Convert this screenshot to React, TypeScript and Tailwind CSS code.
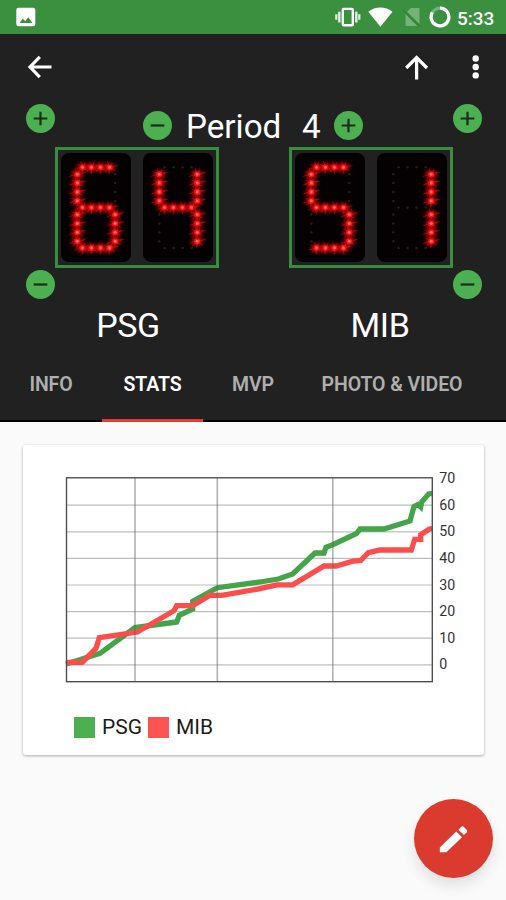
import type { ReactNode } from "react";
import clsx from "clsx";

type Point = [number, number];

const TABS = [
  { label: "INFO", width: "w-[102px]" },
  { label: "STATS", width: "w-[101px]" },
  { label: "MVP", width: "w-[100px]" },
  { label: "PHOTO & VIDEO", width: "w-[178px]" },
];

// Segment order: top, upper left, upper right, middle, lower left, lower right, bottom
const DIGITS: Record<string, string> = {
  "1": "0010010",
  "4": "0111010",
  "5": "1101011",
  "6": "1101111",
};

const COLS = [21.6, 30.6, 39.6, 48.6];
const UPPER = [21.3, 30, 39, 48];
const LOWER = [61.6, 70.6, 79.3, 88.3];

const SEGMENTS: Point[][] = [
  COLS.map((x): Point => [x, 14.3]),
  UPPER.map((y): Point => [16.3, y]),
  UPPER.map((y): Point => [54.2, y]),
  COLS.map((x): Point => [x, 54.6]),
  LOWER.map((y): Point => [16.3, y]),
  LOWER.map((y): Point => [54.2, y]),
  COLS.map((x): Point => [x, 95]),
];

const PSG_LINE =
  "66,664 82,659 100,653.3 135,627.6 176.7,622 179.3,615.3 192.7,609 192.7,601.3 217.3,587.7 260,582 278.3,579 292.7,574 315,553 324,553 326,547.3 332.7,544.7 356.7,533.3 360,529 384,529 410,521 414,506.5 418,504.5 420.7,507 422,501.5 428.8,494 432.6,493.3";
const MIB_LINE =
  "66,662.5 82.3,662.3 96,648.3 99.3,637.7 137.3,632 174,610.7 176.7,605.7 192.7,605.7 210,595.3 221.7,595.3 260,588.7 276.7,584.8 292.7,584.8 324,566 336,566 353.3,561 360.7,560.5 368.3,552.7 380,550 411.3,550 414.7,539.3 420.7,539.3 420.7,534.7 429.3,529 432.6,528.5";

const GRID_Y = [505.2, 531.8, 558.4, 585, 611.6, 638.2, 664.8];
const GRID_X = [135, 217.3, 332.8];
const TICKS = [70, 60, 50, 40, 30, 20, 10, 0];

function StatusBar() {
  return (
    <div className="flex h-[34px] items-center bg-[#3a903e] pl-4 pr-[11px] text-white">
      <svg width="20" height="20" viewBox="0 0 20 20">
        <rect x="0.3" y="0.8" width="19" height="18.5" rx="2.2" fill="currentColor" />
        <path d="M3.5 16l3.4-4.4 2.3 2.7 3-4 4.3 5.7z" fill="#3a903e" />
      </svg>
      <div className="ml-auto flex items-center">
        <svg width="27" height="20" viewBox="0 0 27 20" fill="none" stroke="currentColor">
          <rect x="7.8" y="1.9" width="10" height="16.4" rx="1" strokeWidth="2.4" />
          <path d="M4.3 4.8v10.6M21.3 4.8v10.6" strokeWidth="2.4" strokeOpacity="0.85" />
          <path d="M1.300 7.200v5.600M24.300 7.200v5.600" strokeWidth="2.200" strokeOpacity="0.85" />
        </svg>
        <svg className="ml-[6px]" width="26" height="20" viewBox="0 0 26 20">
          <path d="M.3 4.700C7.100-1 17.700-1 24.500 4.700L12.400 19.800z" fill="currentColor" />
        </svg>
        <svg className="ml-[8px]" width="20" height="20" viewBox="0 0 20 20">
          <path
            d="M9 1h7.500a1 1 0 0 1 1 1v15L5 4.700zM3.500 7l11.800 12H4.500a1 1 0 0 1-1-1z"
            fill="currentColor"
            fillOpacity="0.3"
          />
          <path d="M1 3l17.500 17" stroke="#2f7d34" strokeOpacity="0.6" strokeWidth="1.600" />
        </svg>
        <svg className="ml-[7px]" width="22" height="22" viewBox="0 0 22 22" fill="none" stroke="currentColor">
          <circle cx="11" cy="11" r="8.900" strokeWidth="3.200" strokeOpacity="0.3" />
          <path d="M11 2.100A8.900 8.900 0 1 1 3.400 6.400" strokeWidth="3.200" />
        </svg>
        <span className="ml-[6px] w-[38px] whitespace-nowrap pt-[2px] text-[19px] font-medium leading-none">5:33</span>
      </div>
    </div>
  );
}

function Toolbar() {
  return (
    <div className="flex h-[70px] items-center pb-[4px] pl-[27px] pr-[20px]">
      <svg width="26" height="26" viewBox="0 0 26 26" fill="none" stroke="white" strokeWidth="3.2">
        <path d="M12.800 2.800L3 13l9.800 10.200M3 13H24.500" />
      </svg>
      <svg className="ml-auto" width="26" height="26" viewBox="0 0 26 26" fill="none" stroke="white" strokeWidth="3.2">
        <path d="M2.200 14L12.600 3.500 23 14M12.600 3.500V25.500" />
      </svg>
      <svg className="ml-[36px]" width="20" height="26" viewBox="0 0 20 26" fill="white">
        <circle cx="9.700" cy="4.500" r="3.200" />
        <circle cx="9.700" cy="13" r="3.200" />
        <circle cx="9.700" cy="21.400" r="3.200" />
      </svg>
    </div>
  );
}

function RoundButton({ kind }: { kind: "plus" | "minus" }) {
  return (
    <button
      aria-label={kind}
      className="flex size-[29px] shrink-0 items-center justify-center rounded-full bg-[#4caf50]"
    >
      <svg width="15" height="15" viewBox="0 0 15 15" stroke="#1f2a1f" strokeWidth="2.2">
        <path d={kind === "plus" ? "M.7 7.500h13.600M7.500.7v13.600" : "M.7 7.500h13.600"} />
      </svg>
    </button>
  );
}

function Led({ x, y }: { x: number; y: number }) {
  return (
    <g transform={`translate(${x} ${y})`}>
      <ellipse rx="9.500" ry="7.500" fill="url(#led-glow)" />
      <path
        d="M-9.500 2.600L-3-.8-6.500-3.200-2-2.200-2.200-6.500.4-2.600 2.800-6 2.400-1.900 9.800-2.200 3.200.8 6 4 1.400 2.400-.5 7.500-1.600 2.600-5.500 5.500-3.200 1.500z"
        fill="#ee0000"
        fillOpacity="0.62"
      />
      <circle r="2.900" fill="#ff1414" />
      <circle r="1.400" fill="#ff7c7c" />
    </g>
  );
}

function Digit({ value }: { value: string }) {
  return (
    <svg className="rounded-[8px] bg-[#050001]" width="70" height="109" viewBox="0 0 70 109">
      {SEGMENTS.map((leds, s) =>
        leds.map(([x, y]) =>
          DIGITS[value][s] === "1" ? (
            <Led key={`${x}-${y}`} x={x} y={y} />
          ) : (
            <circle key={`${x}-${y}`} cx={x} cy={y} r="1.300" fill="#241b1a" />
          )
        )
      )}
    </svg>
  );
}

function ScoreFrame({ score }: { score: string }) {
  return (
    <div className="flex h-[121px] w-[164px] items-center justify-between border-[3px] border-[#3a8c3e] px-[3px]">
      {score.split("").map((d, i) => (
        <Digit key={i} value={d} />
      ))}
    </div>
  );
}

function ButtonColumn() {
  return (
    <div className="flex h-[195px] flex-col justify-between">
      <RoundButton kind="plus" />
      <RoundButton kind="minus" />
    </div>
  );
}

function Scoreboard() {
  return (
    <div className="flex justify-between pl-[25.500px] pr-[24.500px]">
      <ButtonColumn />
      <div className="flex w-[398px] flex-col">
        <div className="flex h-[43px] items-center pl-[88.500px] pb-[1px]">
          <RoundButton kind="minus" />
          <span className="ml-[14px] w-[116px] whitespace-pre pt-[3px] text-[33.200px] leading-none text-white">Period</span>
          <span className="w-[32px] pt-[3px] text-[33.200px] leading-none text-white">4</span>
          <RoundButton kind="plus" />
        </div>
        <div className="flex justify-between">
          <ScoreFrame score="64" />
          <ScoreFrame score="51" />
        </div>
      </div>
      <ButtonColumn />
    </div>
  );
}

function Tab({ width, active, children }: { width: string; active?: boolean; children: ReactNode }) {
  return (
    <div
      className={clsx(
        "flex h-[73px] shrink-0 items-center justify-center border-b-[3px] pt-[2px] text-[19.500px] font-semibold tracking-[-0.1px] whitespace-nowrap",
        width,
        active ? "border-[#e53935] text-white" : "border-transparent text-[#afafaf]"
      )}
    >
      {children}
    </div>
  );
}

function ScoreChart() {
  return (
    <svg width="420" height="226" viewBox="56 467 420 226" className="block">
      <g stroke="#000" strokeOpacity="0.26" strokeWidth="1.2">
        {GRID_Y.map((y) => (
          <line key={y} x1="66" x2="432.500" y1={y} y2={y} />
        ))}
      </g>
      <polyline points={PSG_LINE} fill="none" stroke="#43a547" strokeWidth="5.3" />
      <polyline points={MIB_LINE} fill="none" stroke="#ff4c4c" strokeWidth="5.3" />
      <g stroke="#666" strokeOpacity="0.5" strokeWidth="1.600">
        {GRID_X.map((x) => (
          <line key={x} x1={x} x2={x} y1="478" y2="682" />
        ))}
      </g>
      <rect x="66.500" y="477.800" width="365.800" height="203.900" fill="none" stroke="#4f4f4f" strokeWidth="1.400" />
      <g fill="#333" fontSize="14.2">
        {TICKS.map((tick, i) => (
          <text key={tick} x="439.300" y={483.2 + i * 26.6}>
            {tick}
          </text>
        ))}
      </g>
    </svg>
  );
}

function LegendItem({ color, label }: { color: string; label: string }) {
  return (
    <div className="flex w-[74px] items-center gap-[7px]">
      <span className={clsx("size-[21px] shrink-0", color)} />
      <span className="pt-[1px] text-[21px] leading-none text-[#1c1c1c]">{label}</span>
    </div>
  );
}

export default function App() {
  return (
    <div className="relative flex h-[900px] w-[506px] flex-col overflow-hidden bg-[#fafafa] font-['Roboto','Liberation_Sans',sans-serif]">
      <svg width="0" height="0" className="absolute">
        <defs>
          <radialGradient id="led-glow">
            <stop offset="0" stopColor="#ff0000" stopOpacity="0.85" />
            <stop offset="0.45" stopColor="#d00000" stopOpacity="0.4" />
            <stop offset="1" stopColor="#700010" stopOpacity="0" />
          </radialGradient>
        </defs>
      </svg>
      <StatusBar />
      <header className="h-[388px] shrink-0 border-b-2 border-black bg-[#212121]">
        <Toolbar />
        <Scoreboard />
        <div className="flex h-[50px] pl-[2px] pt-[3px] text-[34px] leading-[47px] tracking-[-0.4px] text-white">
          <div className="w-[253px] text-center">PSG</div>
          <div className="w-[253px] text-center">MIB</div>
        </div>
        <nav className="flex">
          {TABS.map((tab) => (
            <Tab key={tab.label} width={tab.width} active={tab.label === "STATS"}>
              {tab.label}
            </Tab>
          ))}
        </nav>
      </header>
      <main className="pl-[23px] pr-[22px] pt-[23px]">
        <section className="h-[310px] rounded-[3px] bg-white pl-[33px] pt-[22px] shadow-[0_1px_3px_rgba(0,0,0,0.32)]">
          <ScoreChart />
          <div className="flex pl-[18px] pt-[23px]">
            <LegendItem color="bg-[#4caf50]" label="PSG" />
            <LegendItem color="bg-[#ff5252]" label="MIB" />
          </div>
        </section>
      </main>
      <button
        aria-label="Edit"
        className="absolute left-[414px] top-[799px] flex size-[79px] items-center justify-center rounded-full bg-[#db3a2f] shadow-[0_8px_14px_rgba(0,0,0,0.1)]"
      >
        <svg width="36" height="36" viewBox="0 0 36 36" fill="white">
          <path d="M3.800 31.200V26.600L20.200 10.600l5.800 5.600L10.300 31.200z" />
          <path d="M22.300 8.700l3-2.900q1.300-1 2.500 0l3 3.100q1 1.200 0 2.300l-2.900 2.900z" />
        </svg>
      </button>
    </div>
  );
}
